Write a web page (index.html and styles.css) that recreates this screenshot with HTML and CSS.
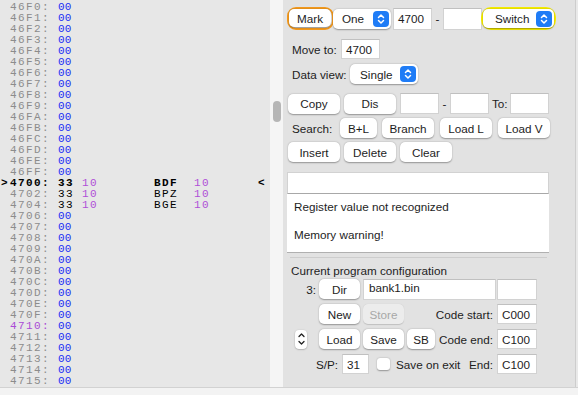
FILE: index.html
```html
<!DOCTYPE html>
<html>
<head>
<meta charset="utf-8">
<link rel="stylesheet" href="styles.css">
</head>
<body>
<div class="window">
  <div class="main">
    <div class="listing">
      <div class="row"><span class="mk"></span><span class="addr">46F0:</span><span class="val">00</span></div>
      <div class="row"><span class="mk"></span><span class="addr">46F1:</span><span class="val">00</span></div>
      <div class="row"><span class="mk"></span><span class="addr">46F2:</span><span class="val">00</span></div>
      <div class="row"><span class="mk"></span><span class="addr">46F3:</span><span class="val">00</span></div>
      <div class="row"><span class="mk"></span><span class="addr">46F4:</span><span class="val">00</span></div>
      <div class="row"><span class="mk"></span><span class="addr">46F5:</span><span class="val">00</span></div>
      <div class="row"><span class="mk"></span><span class="addr">46F6:</span><span class="val">00</span></div>
      <div class="row"><span class="mk"></span><span class="addr">46F7:</span><span class="val">00</span></div>
      <div class="row"><span class="mk"></span><span class="addr">46F8:</span><span class="val">00</span></div>
      <div class="row"><span class="mk"></span><span class="addr">46F9:</span><span class="val">00</span></div>
      <div class="row"><span class="mk"></span><span class="addr">46FA:</span><span class="val">00</span></div>
      <div class="row"><span class="mk"></span><span class="addr">46FB:</span><span class="val">00</span></div>
      <div class="row"><span class="mk"></span><span class="addr">46FC:</span><span class="val">00</span></div>
      <div class="row"><span class="mk"></span><span class="addr">46FD:</span><span class="val">00</span></div>
      <div class="row"><span class="mk"></span><span class="addr">46FE:</span><span class="val">00</span></div>
      <div class="row"><span class="mk"></span><span class="addr">46FF:</span><span class="val">00</span></div>
      <div class="row cur"><span class="mk">&gt;</span><span class="addr">4700:</span><span class="b1">33</span><span class="b2">10</span><span class="mn">BDF</span><span class="op">10</span><span class="ptr">&lt;</span></div>
      <div class="row"><span class="mk"></span><span class="addr">4702:</span><span class="b1">33</span><span class="b2">10</span><span class="mn">BPZ</span><span class="op">10</span></div>
      <div class="row"><span class="mk"></span><span class="addr">4704:</span><span class="b1">33</span><span class="b2">10</span><span class="mn">BGE</span><span class="op">10</span></div>
      <div class="row"><span class="mk"></span><span class="addr">4706:</span><span class="val">00</span></div>
      <div class="row"><span class="mk"></span><span class="addr">4707:</span><span class="val">00</span></div>
      <div class="row"><span class="mk"></span><span class="addr">4708:</span><span class="val">00</span></div>
      <div class="row"><span class="mk"></span><span class="addr">4709:</span><span class="val">00</span></div>
      <div class="row"><span class="mk"></span><span class="addr">470A:</span><span class="val">00</span></div>
      <div class="row"><span class="mk"></span><span class="addr">470B:</span><span class="val">00</span></div>
      <div class="row"><span class="mk"></span><span class="addr">470C:</span><span class="val">00</span></div>
      <div class="row"><span class="mk"></span><span class="addr">470D:</span><span class="val">00</span></div>
      <div class="row"><span class="mk"></span><span class="addr">470E:</span><span class="val">00</span></div>
      <div class="row"><span class="mk"></span><span class="addr">470F:</span><span class="val">00</span></div>
      <div class="row"><span class="mk"></span><span class="addr mark">4710:</span><span class="val">00</span></div>
      <div class="row"><span class="mk"></span><span class="addr">4711:</span><span class="val">00</span></div>
      <div class="row"><span class="mk"></span><span class="addr">4712:</span><span class="val">00</span></div>
      <div class="row"><span class="mk"></span><span class="addr">4713:</span><span class="val">00</span></div>
      <div class="row"><span class="mk"></span><span class="addr">4714:</span><span class="val">00</span></div>
      <div class="row"><span class="mk"></span><span class="addr">4715:</span><span class="val">00</span></div>
    </div>
    <div class="splitter"><div class="thumb"></div></div>
    <div class="panel">
      <div class="line r1">
        <div class="ring orange"><div class="btn w-mark">Mark</div></div>
        <div class="select w-one"><span>One</span><span class="step"><svg width="10" height="12" viewBox="0 0 10 12"><path d="M2.5 4.5 L5 2 L7.5 4.5 M2.5 7.5 L5 10 L7.5 7.5" fill="none" stroke="#fff" stroke-width="1.5" stroke-linecap="round" stroke-linejoin="round"/></svg></span></div>
        <div class="field f-addr tall first">4700</div>
        <span class="dash">-</span>
        <div class="field f-addr tall"></div>
        <div class="ring yellow"><div class="select w-switch"><span>Switch</span><span class="step"><svg width="10" height="12" viewBox="0 0 10 12"><path d="M2.5 4.5 L5 2 L7.5 4.5 M2.5 7.5 L5 10 L7.5 7.5" fill="none" stroke="#fff" stroke-width="1.5" stroke-linecap="round" stroke-linejoin="round"/></svg></span></div></div>
      </div>
      <div class="line r2">
        <span class="lbl l-move">Move to:</span>
        <div class="field f-addr">4700</div>
      </div>
      <div class="line r3">
        <span class="lbl l-data">Data view:</span>
        <div class="select w-single"><span>Single</span><span class="step"><svg width="10" height="12" viewBox="0 0 10 12"><path d="M2.5 4.5 L5 2 L7.5 4.5 M2.5 7.5 L5 10 L7.5 7.5" fill="none" stroke="#fff" stroke-width="1.5" stroke-linecap="round" stroke-linejoin="round"/></svg></span></div>
      </div>
      <div class="line r4">
        <div class="btn w52">Copy</div>
        <div class="btn w52">Dis</div>
        <div class="field f-mid"></div>
        <span class="dash2">-</span>
        <div class="field f-mid"></div>
        <span class="lbl l-to">To:</span>
        <div class="field f-mid"></div>
      </div>
      <div class="line r5">
        <span class="lbl l-search">Search:</span>
        <div class="btn w37">B+L</div>
        <div class="btn w52">Branch</div>
        <div class="btn w52">Load L</div>
        <div class="btn w52">Load V</div>
      </div>
      <div class="line r6">
        <div class="btn w52">Insert</div>
        <div class="btn w52">Delete</div>
        <div class="btn w52">Clear</div>
      </div>
      <div class="cmd"></div>
      <div class="msgs">
        <p>Register value not recognized</p>
        <p>Memory warning!</p>
      </div>
      <div class="group">
        <div class="gtitle">Current program configuration</div>
        <div class="crow">
          <div class="lead num">3:</div>
          <div class="btn w41">Dir</div>
          <div class="field f-file">bank1.bin</div>
          <div class="field f-cfg f-top"></div>
        </div>
        <div class="crow">
          <div class="lead"></div>
          <div class="btn w41">New</div>
          <div class="btn w41 disabled">Store</div>
          <div class="rlbl">Code start:</div>
          <div class="field f-cfg">C000</div>
        </div>
        <div class="crow">
          <div class="lead"><div class="stepper"><svg width="11" height="18" viewBox="0 0 11 18"><path d="M3 6.5 L5.5 4 L8 6.5 M3 11.5 L5.5 14 L8 11.5" fill="none" stroke="#222" stroke-width="1.3" stroke-linecap="round" stroke-linejoin="round"/></svg></div></div>
          <div class="btn w41">Load</div>
          <div class="btn w41">Save</div>
          <div class="btn w28">SB</div>
          <div class="rlbl">Code end:</div>
          <div class="field f-cfg">C100</div>
        </div>
        <div class="crow">
          <div class="sp">S/P:</div>
          <div class="field f-sp">31</div>
          <div class="check"></div>
          <span class="lbl">Save on exit</span>
          <div class="rlbl">End:</div>
          <div class="field f-cfg">C100</div>
        </div>
      </div>
    </div>
  </div>
  <div class="status"></div>
</div>
</body>
</html>
```
FILE: styles.css
```css
* { box-sizing: border-box; }
html, body { margin: 0; padding: 0; }
body {
  width: 578px;
  height: 395px;
  overflow: hidden;
  font-family: "Liberation Sans", Arial, sans-serif;
  font-size: 11.7px;
  color: #1d1d1d;
  background: #f0f0f0;
}
.window { width: 578px; height: 395px; display: flex; flex-direction: column; }
.main { display: flex; height: 388px; flex: none; border-bottom: 1px solid #d2d2d2; background: #e9e9e9; }
.status { flex: 1; background: #f3f3f3; }

/* listing */
.listing {
  width: 270px;
  flex: none;
  background: #e7e7e7;
  padding: 2px 0 0 1px;
  font-family: "Liberation Mono", "Courier New", monospace;
  font-size: 11px;
  letter-spacing: 1.4px;
  line-height: 11px;
  overflow: hidden;
}
.row { display: flex; height: 11px; white-space: pre; }
.mk { width: 9px; font-weight: bold; color: #000; }
.addr { width: 48px; color: #8c8c8c; }
.addr.mark { color: #a94bd6; }
.val { color: #1a2cf5; letter-spacing: 0.2px; }
.b1 { width: 24px; color: #000; }
.b2 { width: 72px; color: #b04fd8; }
.mn { width: 40px; color: #000; }
.op { width: 64px; color: #b04fd8; }
.ptr { color: #000; font-weight: bold; }
.cur .addr, .cur .mn, .cur .b1 { color: #000; font-weight: bold; }

.splitter {
  width: 13px;
  flex: none;
  background: #f5f5f5;
  display: flex;
  flex-direction: column;
  align-items: center;
  padding-top: 101px;
}
.thumb { width: 8px; height: 21px; border-radius: 4px; background: #b6b6b6; }

/* panel */
.panel {
  width: 293px;
  flex: none;
  background: #e2e2e2;
  border-right: 1px solid #cdcdcd;
  padding: 7px 0 0 4px;
  display: flex;
  flex-direction: column;
}
.panel > * { flex: none; }
.line { display: flex; align-items: center; }
.r1 { height: 23px; }
.r2 { margin-top: 9px; height: 20px; }
.r3 { margin-top: 5px; height: 20px; }
.r4 { margin-top: 9px; height: 21px; padding-left: 1px; }
.r5 { margin-top: 4px; height: 20px; }
.r6 { margin-top: 4px; height: 20px; padding-left: 1px; }

.btn {
  height: 20px;
  background: #fff;
  border-radius: 5px;
  box-shadow: 0 0.5px 1.5px rgba(0,0,0,0.35);
  display: flex;
  align-items: center;
  justify-content: center;
  color: #1d1d1d;
  flex: none;
  white-space: nowrap;
}
.btn.disabled { color: #a8a8a8; background: #ececec; box-shadow: 0 0.5px 1px rgba(0,0,0,0.15); }
.w52 { width: 52px; margin-right: 4px; }
.r5 .w52 { margin-right: 6px; }
.w37 { width: 37px; margin-right: 5px; }
.w41 { width: 41px; margin-right: 3px; }
.w28 { width: 28px; }
.w-mark { width: 42px; height: 18px; }

.ring { border: 2px solid; border-radius: 9px; display: flex; flex: none; }
.ring.orange { border-color: #f39a1e; width: 47px; height: 23px; }
.ring.yellow { border-color: #f5ec00; margin-left: -1px; width: 75px; height: 23px; border-radius: 10px; }

.select {
  height: 20px;
  background: #fff;
  border-radius: 5px;
  box-shadow: 0 0.5px 1.5px rgba(0,0,0,0.35);
  display: flex;
  align-items: center;
  justify-content: space-between;
  padding: 0 2px 0 9px;
  flex: none;
}
.step {
  width: 16px; height: 16px;
  background: #1f7cf6;
  border-radius: 4px;
  display: flex; align-items: center; justify-content: center;
}
.w-one { width: 58px; margin-left: -1px; }
.w-switch { width: 71px; height: 19px; padding-left: 12px; }
.w-single { width: 68px; padding-left: 10px; }

.field {
  background: #fff;
  border: 1px solid #d2d2d2;
  border-top-color: #c0c0c0;
  height: 20px;
  display: flex;
  align-items: center;
  padding: 0 4px;
  flex: none;
}
.f-addr { width: 39px; }
.f-addr.tall { height: 22px; }
.f-addr.first { margin-left: 2px; }
.dash, .dash2 { width: 11px; text-align: center; flex: none; }
.f-mid { width: 39px; height: 21px; }
.lbl { flex: none; white-space: nowrap; }
.l-move { width: 54px; padding-left: 5px; }
.l-data { width: 63px; padding-left: 5px; }
.l-to { width: 21px; padding-left: 3px; }
.l-search { width: 53px; padding-left: 5px; }

.cmd {
  margin-top: 10px;
  width: 262px;
  height: 22px;
  background: #fff;
  border: 1px solid #d2d2d2;
  border-bottom: 1px solid #a8a8a8;
}
.msgs {
  width: 262px;
  height: 59px;
  background: #fff;
  border-bottom: 1px solid #b0b0b0;
  padding: 5px 0 0 7px;
}
.msgs p { margin: 0 0 13px 0; line-height: 15px; }

.group {
  margin-top: 4px;
  margin-left: 3px;
  width: 257px;
  border-top: 1px solid #cdcdcd;
  padding-top: 6px;
}
.gtitle { margin-left: 1px; line-height: 14px; height: 14px; }
.crow {
  display: flex;
  align-items: center;
  height: 22px;
  width: 247px;
  margin-top: 3px;
}
.gtitle + .crow { margin-top: 0; }
.lead { width: 29px; flex: none; display: flex; align-items: center; }
.num { justify-content: flex-end; padding-right: 3px; }
.f-file { width: 133px; height: 21px; padding-left: 5px; align-items: flex-start; padding-top: 1px; margin-right: 1px; }
.f-cfg { width: 40px; height: 20px; margin-left: auto; }
.f-top { height: 21px; }
.rlbl { margin-left: auto; padding-right: 4px; white-space: nowrap; flex: none; }
.rlbl + .f-cfg { margin-left: 0; }
.sp { width: 52px; padding-left: 26px; flex: none; white-space: nowrap; }
.f-sp { width: 27px; height: 20px; }
.check {
  width: 13px; height: 12px;
  background: #fff;
  border-radius: 3px;
  box-shadow: 0 0.5px 1.5px rgba(0,0,0,0.35);
  margin: 0 6px 0 8px;
  flex: none;
}
.stepper {
  width: 12px; height: 19px;
  background: #fff;
  border-radius: 4px;
  box-shadow: 0 0.5px 1.5px rgba(0,0,0,0.35);
  margin-left: 5px;
  display: flex; align-items: center; justify-content: center;
}
```
